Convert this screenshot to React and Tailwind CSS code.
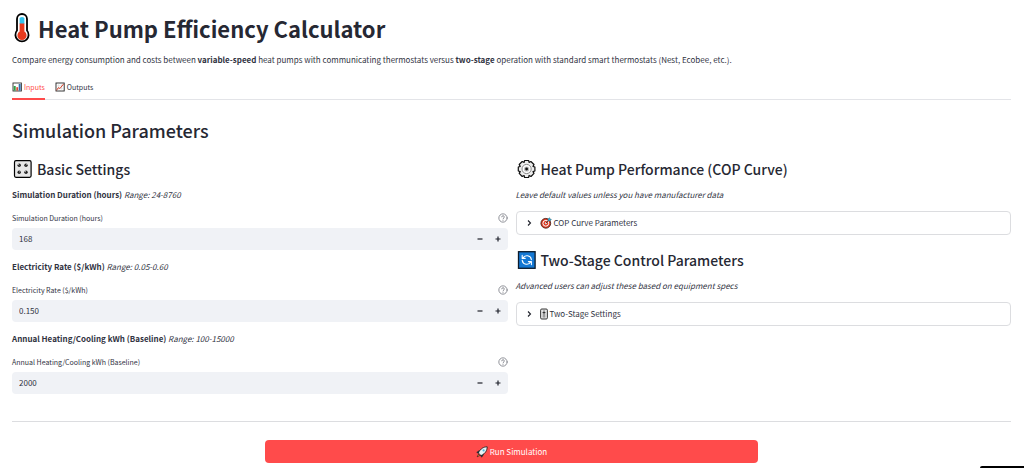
import { useState } from "react";

const ThermometerIcon = () => (
  <svg viewBox="1 0 22 30" className="w-[22px] h-[30px]" aria-hidden="true">
    <path
      d="M6 6a5 5 0 0 1 10 0v11.5a6.6 6.6 0 1 1-10 0z"
      fill="#fff"
      stroke="#000"
      strokeWidth="1.8"
    />
    <path d="M8.6 5.6q0-1.6 2.4-1.6t2.4 1.6V11H8.6z" fill="#35c3ee" />
    <path d="M8.6 10.5h4.8v8a4.6 4.6 0 1 1-4.8 0z" fill="#e83a1e" />
  </svg>
);

const BarChartIcon = () => (
  <svg viewBox="0 0 10 10" className="w-[10px] h-[10px]" aria-hidden="true">
    <rect x="1" y="1" width="8.4" height="8" fill="#fff" stroke="#333" strokeWidth="0.9" />
    <rect x="1.7" y="4" width="2" height="4.6" fill="#2e9e48" />
    <rect x="4.3" y="5.2" width="1.8" height="3.4" fill="#d9482f" />
    <rect x="6.7" y="2" width="2" height="6.6" fill="#2f6fae" />
  </svg>
);

const LineChartIcon = () => (
  <svg viewBox="0 0 10 10" className="w-[10px] h-[10px]" aria-hidden="true">
    <rect x="1" y="1" width="8.2" height="8" fill="#fff" stroke="#222" strokeWidth="0.9" />
    <path d="M3.6 1.5v7M6.4 1.5v7M1.5 3.8h7M1.5 6.4h7" stroke="#ccc" strokeWidth="0.4" />
    <path d="M1.6 8.3 3.4 5.6l1.5.9L8.6 2" fill="none" stroke="#d8432c" strokeWidth="1" />
  </svg>
);

const KnobsIcon = () => (
  <svg viewBox="-0.8 0 20 20" className="w-5 h-5" aria-hidden="true">
    <rect x="1.7" y="1.7" width="16.6" height="16.6" rx="1.5" fill="#e6e6e6" stroke="#000" strokeWidth="1.2" />
    {[
      [6.4, 6.3, 1],
      [13.2, 6.3, -1],
      [6.4, 13.2, -1],
      [13.2, 13.2, 1],
    ].map(([x, y, d]) => (
      <g key={`${x}-${y}`}>
        <circle cx={x} cy={y} r="1.7" fill="#222" />
        <path d={`M${x} ${y}l${-d * 1.3}-1.3`} stroke="#ddd" strokeWidth="0.8" />
      </g>
    ))}
  </svg>
);

const GearIcon = () => (
  <svg viewBox="-0.6 0 20 20" className="w-5 h-5" aria-hidden="true">
    <path
      d="M8 1.5h4l.5 1.9 1.8-.9 3.1 3-1 1.9 1.9.6v4l-1.9.6 1 1.8-3 3.1-1.9-1-.5 2H8l-.5-2-1.9 1-3-3.1 1-1.8L1.7 12V8l1.9-.6-1-1.9 3-3 1.9.9z"
      fill="#ededed"
      stroke="#111"
      strokeWidth="1.2"
      strokeLinejoin="round"
    />
    <circle cx="10" cy="10" r="4.6" fill="#fff" stroke="#888" strokeWidth="1" />
    <circle cx="10" cy="10" r="2.6" fill="#bbb" />
    <circle cx="10" cy="10" r="1.4" fill="#111" />
  </svg>
);

const RefreshIcon = () => (
  <svg viewBox="-0.8 0 20 20" className="w-5 h-5" aria-hidden="true">
    <rect x="1.7" y="1.7" width="16.6" height="16.6" fill="#1478d4" stroke="#0b1a2b" strokeWidth="1.3" />
    <g fill="none" stroke="#fff" strokeWidth="1.1" strokeLinecap="round" strokeLinejoin="round">
      <path d="M6 8.2A4.6 4.6 0 0 1 14.6 9.6M5.4 5.4v3h3" />
      <path d="M14 11.8A4.6 4.6 0 0 1 5.4 10.4M14.6 14.6v-3h-3" />
    </g>
  </svg>
);

const TargetIcon = () => (
  <svg viewBox="0 0 12 12" className="w-3 h-3" aria-hidden="true">
    <circle cx="5.8" cy="6.3" r="4.9" fill="#dc3a22" stroke="#3a1a14" strokeWidth="0.8" />
    <circle cx="5.8" cy="6.3" r="2.9" fill="none" stroke="#fff" strokeWidth="1" />
    <circle cx="5.8" cy="6.3" r="1" fill="#fff" />
    <path d="M5.8 6.3 9 3" stroke="#222" strokeWidth="0.8" />
    <path d="M8 3.8V2l1.6-1.3.4 1.4 1.4.3L10 4z" fill="#35b5dc" stroke="#1d4a5c" strokeWidth="0.4" />
  </svg>
);

const SliderIcon = () => (
  <svg viewBox="0 0 8 12" className="w-2 h-3" aria-hidden="true">
    <rect x="0.6" y="1" width="6.8" height="10" rx="1.2" fill="#e4e4e4" stroke="#222" strokeWidth="0.9" />
    <path d="M4 2.4v7.2" stroke="#444" strokeWidth="0.9" />
    <path d="M2.6 4.6h2.8" stroke="#333" strokeWidth="1.2" />
    <path d="M2 7h.8M5.2 7H6M2 8.8h.8M5.2 8.8H6" stroke="#888" strokeWidth="0.5" />
  </svg>
);

const RocketIcon = () => (
  <svg viewBox="0 0 12 12" className="w-3 h-3" aria-hidden="true">
    <path d="M3.4 4.6.8 6.4 2.8 7.4zM7.4 8.6 5.6 11.2 4.6 9.2z" fill="#2a7f9e" stroke="#111" strokeWidth="0.7" />
    <path
      d="M11.2.8C8 .8 4.4 2.4 2.4 7l2.6 2.6C9.6 7.6 11.2 4 11.2.8z"
      fill="#e8f3f7"
      stroke="#111"
      strokeWidth="0.8"
    />
    <circle cx="7.6" cy="4.4" r="1.1" fill="#4bb8d8" />
    <path d="M2.4 8.4 1.2 10.8 3.6 9.6z" fill="#f6b333" stroke="#111" strokeWidth="0.6" />
  </svg>
);

const HelpIcon = () => (
  <svg
    viewBox="0 0 24 24"
    className="w-[10px] h-[10px]"
    fill="none"
    stroke="#7b7d86"
    strokeWidth="2"
    strokeLinecap="round"
    aria-hidden="true"
  >
    <circle cx="12" cy="12" r="10" />
    <path d="M9 9.2a3 3 0 0 1 6 .6c0 2-3 2.5-3 4.4M12 17.6v.1" />
  </svg>
);

const settings = [
  { id: "duration", label: "Simulation Duration (hours)", range: "24-8760", value: "168", step: 1 },
  { id: "rate", label: "Electricity Rate ($/kWh)", range: "0.05-0.60", value: "0.150", step: 0.01 },
  {
    id: "baseline",
    label: "Annual Heating/Cooling kWh (Baseline)",
    range: "100-15000",
    value: "2000",
    step: 100,
  },
];

const NumberField = ({ id, label, range, value, step }) => {
  const [current, setCurrent] = useState(value);
  const decimals = (value.split(".")[1] || "").length;

  const change = (amount) => {
    setCurrent((Number(current) + amount).toFixed(decimals));
  };

  return (
    <div>
      <p className="text-[8px] leading-3">
        <strong>{label}</strong> <em>Range: {range}</em>
      </p>
      <div className="mt-[11px] flex items-center justify-between">
        <label htmlFor={id} className="text-[7px] leading-3">
          {label}
        </label>
        <button type="button" aria-label={`Help: ${label}`}>
          <HelpIcon />
        </button>
      </div>
      <div className="mt-1 flex h-[22px] rounded bg-[#f0f2f6] pr-px">
        <input
          id={id}
          inputMode="decimal"
          value={current}
          onChange={(e) => setCurrent(e.target.value)}
          className="min-w-0 flex-1 bg-transparent px-[7px] text-[8px] outline-none"
        />
        <button
          type="button"
          aria-label="Decrease"
          onClick={() => change(-step)}
          className="flex w-[18px] items-center justify-center"
        >
          <svg viewBox="0 0 6 6" className="w-1.5 h-1.5" stroke="#1f212b" strokeWidth="1.2">
            <path d="M.5 3h5" />
          </svg>
        </button>
        <button
          type="button"
          aria-label="Increase"
          onClick={() => change(step)}
          className="flex w-[18px] items-center justify-center"
        >
          <svg viewBox="0 0 6 6" className="w-1.5 h-1.5" stroke="#1f212b" strokeWidth="1.2">
            <path d="M.5 3h5M3 .5v5" />
          </svg>
        </button>
      </div>
    </div>
  );
};

const SectionTitle = ({ icon, children }) => (
  <h3 className="flex items-center gap-[5px] text-[14px] leading-5 font-medium text-[#262833]">
    {icon}
    {children}
  </h3>
);

const Expander = ({ icon, title }) => {
  const [open, setOpen] = useState(false);

  return (
    <button
      type="button"
      aria-expanded={open}
      onClick={() => setOpen(!open)}
      className="mt-[10px] flex h-6 w-full items-center rounded border border-[#dcdde0] px-2 text-[8px]"
    >
      <svg
        viewBox="0 0 8 8"
        className="mr-[7px] w-2 h-2"
        fill="none"
        stroke="#1f212b"
        strokeWidth="1.1"
        aria-hidden="true"
      >
        <path d="M3 1.5 5.5 4 3 6.5" />
      </svg>
      {icon}
      <span className="ml-0.5">{title}</span>
    </button>
  );
};

const App = () => {
  const [tab, setTab] = useState("inputs");

  const tabClass = (name) =>
    `flex items-center gap-0.5 border-b-2 pb-[5px] leading-3 ${
      tab === name ? "border-[#ff4b4b] text-[#ff4b4b]" : "border-transparent"
    }`;

  return (
    <main className="bg-white pt-3 pr-[13px] pl-3 font-['Noto_Sans_CJK_SC','Noto_Sans',sans-serif] text-[#31333f]">
      <h1 className="flex items-center gap-1 text-[22px] leading-8 font-bold text-[#262833]">
        <ThermometerIcon />
        Heat Pump Efficiency Calculator
      </h1>
      <p className="mt-[10px] text-[8px] leading-3">
        Compare energy consumption and costs between <strong>variable-speed</strong> heat pumps with
        communicating thermostats versus <strong>two-stage</strong> operation with standard smart
        thermostats (Nest, Ecobee, etc.).
      </p>

      <div
        role="tablist"
        className="mt-[15px] flex gap-[10px] text-[7px] shadow-[inset_0_-1px_0_#e3e4e8]"
      >
        <button
          type="button"
          role="tab"
          aria-selected={tab === "inputs"}
          onClick={() => setTab("inputs")}
          className={tabClass("inputs")}
        >
          <BarChartIcon />
          Inputs
        </button>
        <button
          type="button"
          role="tab"
          aria-selected={tab === "outputs"}
          onClick={() => setTab("outputs")}
          className={tabClass("outputs")}
        >
          <LineChartIcon />
          Outputs
        </button>
      </div>

      <h2 className="mt-[18px] text-[18px] leading-6 font-medium text-[#262833]">
        Simulation Parameters
      </h2>

      <div className="mt-[17px] grid grid-cols-2 gap-2">
        <section>
          <SectionTitle icon={<KnobsIcon />}>Basic Settings</SectionTitle>
          <div className="mt-[10px] flex flex-col gap-[11px]">
            {settings.map((s) => (
              <NumberField key={s.id} {...s} />
            ))}
          </div>
        </section>

        <div className="flex flex-col gap-[15px]">
          <section>
            <SectionTitle icon={<GearIcon />}>Heat Pump Performance (COP Curve)</SectionTitle>
            <p className="mt-[10px] text-[8px] leading-3 italic">
              Leave default values unless you have manufacturer data
            </p>
            <Expander icon={<TargetIcon />} title="COP Curve Parameters" />
          </section>
          <section>
            <SectionTitle icon={<RefreshIcon />}>Two-Stage Control Parameters</SectionTitle>
            <p className="mt-[10px] text-[8px] leading-3 italic">
              Advanced users can adjust these based on equipment specs
            </p>
            <Expander icon={<SliderIcon />} title="Two-Stage Settings" />
          </section>
        </div>
      </div>

      <hr className="mt-[27px] border-[#dcdde0]" />

      <div className="mt-[18px] grid grid-cols-[1fr_2fr_1fr] gap-1.5">
        <button
          type="button"
          className="col-start-2 flex h-[23px] items-center justify-center gap-0.5 rounded bg-[#ff4b4b] text-[8px] text-white"
        >
          <RocketIcon />
          Run Simulation
        </button>
      </div>

      <div className="fixed right-0 bottom-0 h-0.5 w-11 rounded-tl-sm bg-black" />
    </main>
  );
};

export default App;
